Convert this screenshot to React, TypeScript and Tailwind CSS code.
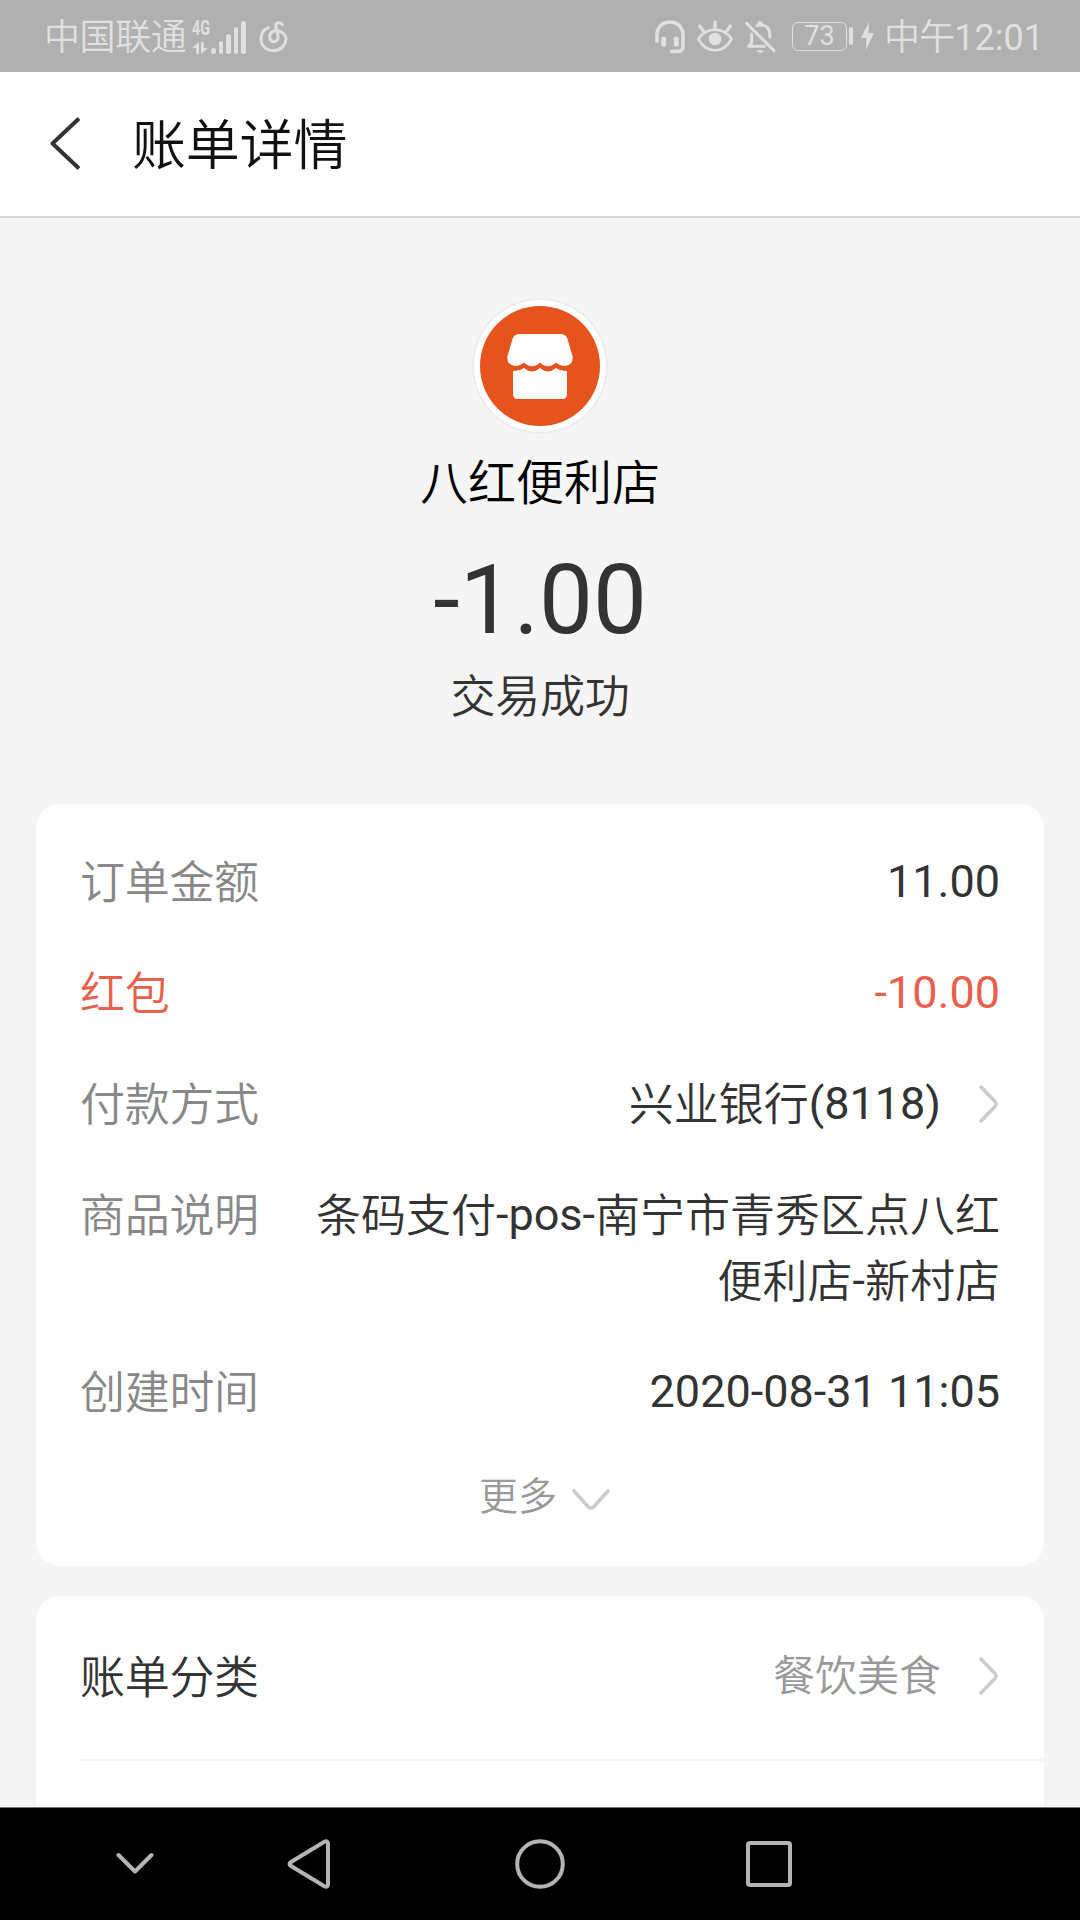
type Row = {
  label: string;
  value: string;
  red?: boolean;
  arrow?: boolean;
};

const rows: Row[] = [
  { label: "订单金额", value: "11.00" },
  { label: "红包", value: "-10.00", red: true },
  { label: "付款方式", value: "兴业银行(8118)", arrow: true },
  { label: "商品说明", value: "条码支付-pos-南宁市青秀区点八红便利店-新村店" },
  { label: "创建时间", value: "2020-08-31 11:05" },
];

// Los caracteres chinos van un poco mas finos y bajos que los latinos
const Mixed = ({ text }: { text: string }) => (
  <span>
    {text.split(/([\u4e00-\u9fff]+)/).map((part, key) =>
      /[\u4e00-\u9fff]/.test(part) ? (
        <span key={key} className="relative top-[2px] font-[350]">
          {part}
        </span>
      ) : (
        part
      )
    )}
  </span>
);

const ArrowRight = () => (
  <svg width="20" height="38" viewBox="0 0 20 38" fill="none" className="mr-px shrink-0 text-[#cccccc]">
    <path
      d="M2 2 L16 16.5 Q18 19 16 21.5 L2 36"
      stroke="currentColor"
      strokeWidth="3.6"
      strokeLinecap="round"
      strokeLinejoin="round"
    />
  </svg>
);

const ArrowDown = () => (
  <svg width="38" height="22" viewBox="0 0 38 22" fill="none" className="mt-[5px] text-[#cccccc]">
    <path
      d="M2 2 L16.5 18 Q19 20.5 21.5 18 L36 2"
      stroke="currentColor"
      strokeWidth="3.6"
      strokeLinecap="round"
      strokeLinejoin="round"
    />
  </svg>
);

const StatusBar = () => (
  <header className="flex h-[72px] items-center bg-[#b0b0b0] pl-[44px] pr-[36px] text-[36px] font-[350] leading-[76px] text-[#e0e0e0]">
    <span className="h-[72px] w-[148px] tracking-[-0.4px]">中国联通</span>

    {/* red y señal */}
    <div className="mt-px flex h-[34px] w-[54px] items-end">
      <div className="flex h-[34px] w-[19px] flex-col justify-between">
        <span className="origin-left scale-x-[0.72] text-[20px] font-bold leading-[17px]">4G</span>
        <svg width="16" height="12" viewBox="0 0 16 12" fill="currentColor">
          <path d="M7 0 V12 H4.2 V6 H0 Z M9 0 H11.8 V6 H16 L9 12 Z" />
        </svg>
      </div>
      <div className="flex items-end gap-[2.9px]">
        <span className="h-[6px] w-[4.7px] rounded-full bg-current" />
        <span className="h-[13px] w-[4.7px] rounded-full bg-current" />
        <span className="h-[20px] w-[4.7px] rounded-full bg-current" />
        <span className="h-[27px] w-[4.7px] rounded-full bg-current" />
        <span className="h-[33px] w-[4.7px] rounded-full bg-current" />
      </div>
    </div>

    <svg
      width="30"
      height="33"
      viewBox="0 0 90 99"
      fill="none"
      stroke="currentColor"
      strokeWidth="9"
      strokeLinecap="round"
      className="ml-[13px] mt-px"
    >
      <path d="M70 14 C64 5 50 6 50 19 L57 47 C61 69 33 71 32 52 C31 36 48 28 62 34 C76 39 82 46 81 58 C79 78 62 92 43 92 C22 92 6 77 6 56 C6 40 15 28 28 23" />
    </svg>

    <div className="ml-auto flex items-center">
      <svg width="30" height="34" viewBox="0 0 90 102" fill="none" stroke="currentColor" strokeLinecap="round" className="mt-px">
        <path d="M6 64 V45 C6 -7 84 -7 84 45 V78 Q84 94 68 94 H50" strokeWidth="11" />
        <path d="M26 57 V73 M64 57 V73" strokeWidth="15" />
      </svg>
      <svg width="36" height="32" viewBox="0 0 108 96" fill="none" stroke="currentColor" strokeLinecap="round" className="ml-3">
        <path d="M4 57 C28 20 80 20 104 57 C80 102 28 102 4 57 Z" strokeWidth="8" strokeLinejoin="round" />
        <path d="M54 6 V24 M8 18 L19 33 M100 18 L89 33" strokeWidth="10" />
        <circle cx="54" cy="57" r="19" fill="currentColor" stroke="none" />
      </svg>
      <svg width="31" height="34" viewBox="0 0 93 102" fill="none" stroke="currentColor" strokeLinecap="round" className="ml-3 mt-px">
        <path d="M5 10 L87 92" strokeWidth="9" />
        <path d="M20 42 V68 L11 79 H58 M36 17 C66 10 75 26 75 52" strokeWidth="9" strokeLinejoin="round" />
        <path d="M40 14 Q44 0 52 14" strokeWidth="8" />
        <path d="M34 91 H58 Q46 107 34 91 Z" fill="currentColor" stroke="none" />
      </svg>
      <div className="ml-4 mt-px flex h-[29px] w-[55px] items-center justify-center rounded-[6px] border-[1.5px] border-current text-[27px] font-normal leading-[27px]">
        73
      </div>
      <span className="ml-[2px] h-[18px] w-[4px] rounded-full bg-current" />
      <svg width="13" height="28" viewBox="0 0 13 28" fill="currentColor" className="ml-2">
        <path d="M8 0 L0 16 H5.5 L5 28 L13 11 H7.5 Z" />
      </svg>
      <span className="ml-[10px] h-[72px] font-normal">
        <span className="font-[350] tracking-[-0.8px]">中午</span>12:01
      </span>
    </div>
  </header>
);

const TitleBar = () => (
  <div className="flex h-[146px] items-center border-b-2 border-[#d5d8d7] bg-white pl-[50px]">
    <svg width="31" height="53" viewBox="0 0 31 53" fill="none" className="-mt-px text-[#333333]">
      <path d="M29 1.5 L2.5 26.5 L29 51.5" stroke="currentColor" strokeWidth="4" strokeLinejoin="round" />
    </svg>
    <h1 className="ml-[51px] mt-[6px] text-[54px] font-[350] leading-[72px] tracking-[-0.2px] text-[#111111]">
      账单详情
    </h1>
  </div>
);

const Merchant = () => (
  <section className="flex h-[586px] flex-col items-center pt-20">
    <svg width="136" height="136" viewBox="0 0 136 136">
      <circle cx="68" cy="68" r="68" fill="#ececec" />
      <circle cx="68" cy="68" r="66" fill="#ffffff" />
      <circle cx="68" cy="68" r="60" fill="#e5541d" />
      {/* toldo y mostrador de la tienda */}
      <path
        fill="#ffffff"
        d="M48 36 H88 Q94 36 95.500 41 L100.500 58 Q101.500 66 95 67.500 Q89 69 84 64.500 Q76 72 68 64.500 Q60 72 52 64.500 Q47 69 41 67.500 Q34.500 66 35.500 58 L40.500 41 Q42 36 48 36 Z"
      />
      <path
        fill="#ffffff"
        d="M41 73 Q47 73.500 52 70 Q60 77 68 70 Q76 77 84 70 Q89 73.500 95 73 V96 Q95 101 90 101 H46 Q41 101 41 96 Z"
      />
    </svg>
    <h2 className="mt-[14px] text-[48px] font-[350] leading-[72px] text-black">八红便利店</h2>
    <p className="mt-[24px] text-[96px] leading-[112px] text-[#333333]">-1.00</p>
    <p className="mt-[9px] text-[45px] font-[350] leading-[66px] tracking-[-0.3px] text-[#333333]">交易成功</p>
  </section>
);

const Details = () => (
  <section className="mx-9 h-[762px] rounded-[24px] bg-white px-[44px] pt-[45px] text-[45px] leading-[66px]">
    <dl className="flex flex-col gap-[45px]">
      {rows.map((row) => (
        <div
          key={row.label}
          className={`flex justify-between ${row.red ? "text-[#e8604c]" : "text-[#333333]"}`}
        >
          <dt className={`shrink-0 tracking-[-0.3px] ${row.red ? "" : "text-[#888888]"}`}>
            <Mixed text={row.label} />
          </dt>
          <dd className="flex max-w-[690px] items-center gap-[38px] text-right">
            <Mixed text={row.value} />
            {row.arrow && <ArrowRight />}
          </dd>
        </div>
      ))}
    </dl>
    <button className="mt-10 flex w-full items-center justify-center gap-[15px] pl-[9px] text-[39px] leading-[64px] text-[#999999]">
      <span className="font-[350]">更多</span>
      <ArrowDown />
    </button>
  </section>
);

const Category = () => (
  <section className="mx-9 mt-[30px] h-[211px] rounded-t-[24px] bg-white pl-[44px] font-[350]">
    <div className="flex h-[165px] items-center justify-between border-b-2 border-[#f5f5f5] pr-[44px]">
      <span className="mt-[2px] text-[45px] tracking-[-0.3px] text-[#333333]">账单分类</span>
      <span className="-mt-[3px] flex items-center gap-[38px] text-[42px] text-[#999999]">
        餐饮美食
        <ArrowRight />
      </span>
    </div>
  </section>
);

const NavBar = () => (
  <nav className="flex h-[113px] items-center border-t border-[#777777] bg-black pl-[116px] text-[#b4b4b4]">
    <svg width="38" height="24" viewBox="0 0 38 24" fill="none" stroke="currentColor" strokeWidth="4" strokeLinecap="round" strokeLinejoin="round">
      <path d="M2.500 3 L19 19.500 L35.500 3" />
    </svg>
    <svg width="44" height="50" viewBox="0 0 44 50" fill="none" stroke="currentColor" strokeWidth="4" strokeLinejoin="round" className="ml-[133px]">
      <path d="M37 3 Q41 1 41 5 V45 Q41 49 37 47 L4 27 Q1 25 4 23 Z" />
    </svg>
    <svg width="50" height="50" viewBox="0 0 50 50" fill="none" stroke="currentColor" strokeWidth="4" className="ml-[184px]">
      <circle cx="25" cy="25" r="22.800" />
    </svg>
    <span className="ml-[181px] h-[46px] w-[46px] rounded-[4px] border-4 border-current" />
  </nav>
);

export default function App() {
  return (
    <main className="flex h-[1920px] w-[1080px] flex-col overflow-hidden bg-[#f5f5f5] font-['Roboto','Noto_Sans_CJK_SC',sans-serif]">
      <StatusBar />
      <TitleBar />
      <Merchant />
      <Details />
      <Category />
      <NavBar />
    </main>
  );
}
